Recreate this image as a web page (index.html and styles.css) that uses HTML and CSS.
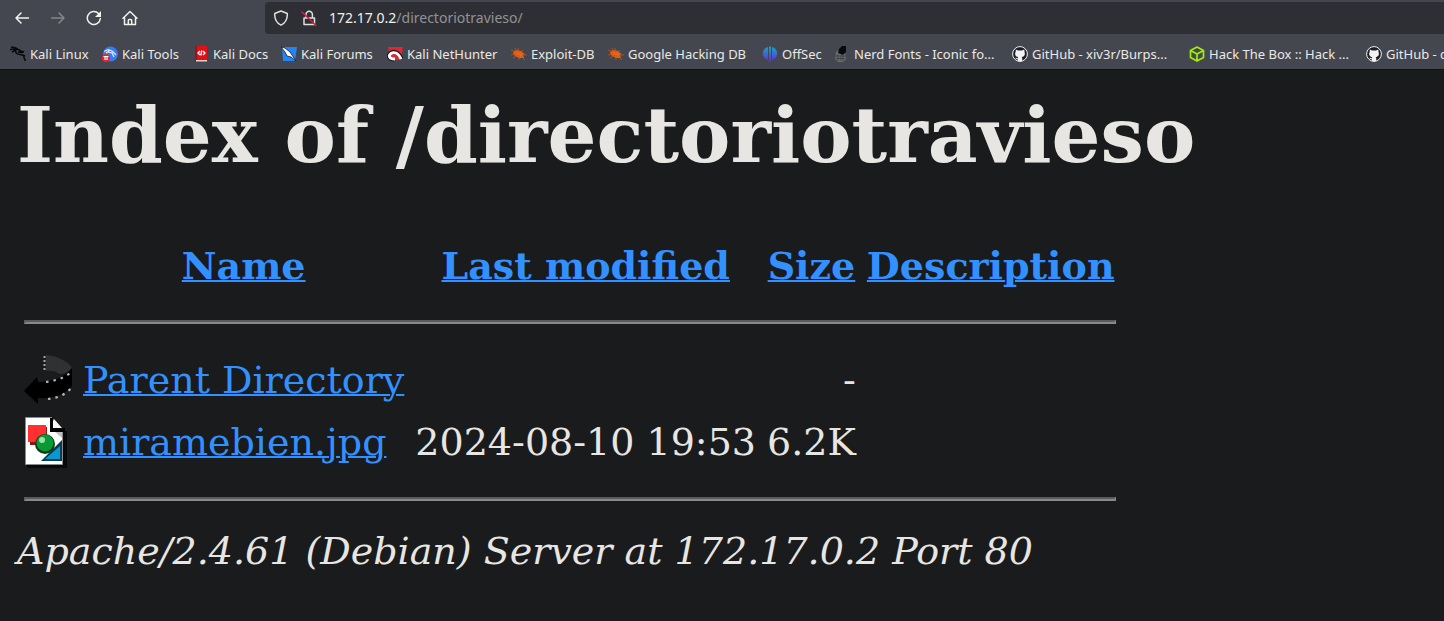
FILE: index.html
```html
<!DOCTYPE html>
<html lang="en">
<head>
<meta charset="utf-8">
<title>Index of /directoriotravieso</title>
<link rel="stylesheet" href="styles.css">
</head>
<body>
<header class="browser">
  <div class="toolbar">
    <div class="nav">
      <button type="button" class="tool" aria-label="Back"><svg viewBox="0 0 16 16"><path d="M14.500 8H2M7 3 2 8l5 5"/></svg></button>
      <button type="button" class="tool" aria-label="Forward" disabled><svg viewBox="0 0 16 16"><path d="M1.500 8H14M9 3l5 5-5 5"/></svg></button>
      <button type="button" class="tool" aria-label="Reload"><svg viewBox="0 0 16 16"><path d="M14.300 8.500A6.500 6.500 0 1 1 12.500 3.500"/><path class="solid" d="M15 1v6H9z"/></svg></button>
      <button type="button" class="tool" aria-label="Home"><svg viewBox="0 0 16 16"><path d="M1 8.200 8 1.500l7 6.700M2.500 7.500v7h11v-7M6.300 14.500v-4q0-1 1-1h1.400q1 0 1 1v4"/></svg></button>
    </div>
    <div class="address-bar">
      <svg class="bar-icon" viewBox="0 0 16 16"><path d="M8 1 14.300 3.500C14.600 9 12.500 13 8 15.200 3.500 13 1.400 9 1.700 3.500z"/></svg>
      <svg class="bar-icon" viewBox="0 0 16 16"><path d="M3 8h10.500v6.500H3zM5 8V4.500a3.200 3.200 0 0 1 6.400 0V8"/><path class="slash" d="M1 2l14 13.500"/></svg>
      <div class="url" role="textbox" aria-label="Address" tabindex="0">172.17.0.2<span class="path">/directoriotravieso/</span></div>
    </div>
  </div>
  <nav class="bookmarks">
    <a class="w-kali" href="#"><svg viewBox="0 0 16 16"><path fill="none" stroke="#08090b" stroke-width="1.500" d="M0 3.500 6 3l4 1M1 1l5 1 3 2M2 6l4-2M6 3.500C5 7 7 8.500 10 8.500s4 1.500 4 3l1.500 3.500M9 4.500l5 1.500M8 6l5 .500M12 9l3 1"/></svg>Kali Linux</a>
    <a class="w-tools" href="#"><svg viewBox="0 0 16 16"><circle cx="8.500" cy="8" r="7.500" fill="#367bf0"/><path fill="none" stroke="#e7f0ff" stroke-width="1.100" d="M2 5.500 6 3.500l4 1.500 4 4M6 6l4 1 2 4M4 7l4-3"/><circle cx="4" cy="12" r="4" fill="#e3262f"/><path stroke="#fff" stroke-width="1.100" d="M1.500 10.500h5M3 10v4M5 10v4"/></svg>Kali Tools</a>
    <a class="w-docs" href="#"><svg viewBox="0 0 16 16"><path fill="#a90e15" d="M2 0h12v15.500H2z"/><path fill="#df1118" d="M4 0h10v14H4z"/><path fill="#e8d5d4" d="M3 14h11v1.500H3z"/><path fill="none" stroke="#fff" stroke-width="1.300" d="M7 5 5 7l2 2M8.800 4.500l-1 5M10 5l2 2-2 2"/></svg>Kali Docs</a>
    <a class="w-forums" href="#"><svg viewBox="0 0 16 16"><path fill="#2484f4" d="M1 1h15l-2 14H2z"/><path fill="#fff" stroke="#111821" stroke-width=".8" d="M0 1l4 1 5 4 2 3 4 6-5-4-4-1-2-4z"/></svg>Kali Forums</a>
    <a class="w-hunter" href="#"><svg viewBox="0 0 16 16"><path fill="#e12632" d="M1 1h15l-2 13H3z"/><path fill="none" stroke="#15171a" stroke-width="4" d="M7.500 13.500c-6 0-7-4-4-6.500s8-1 11 5.500"/><path fill="none" stroke="#fff" stroke-width="2.800" d="M8 13c-6 0-7-3.500-4-5.500S11 6.500 14 13"/></svg>Kali NetHunter</a>
    <a class="w-exploit" href="#"><svg viewBox="0 0 16 16"><path fill="#ef6210" d="m2 6 3-2 5 1 2 2 2 1-2 1 1 3-5 0-5-3z"/><path stroke="#b95422" stroke-width=".8" d="M0 4l5 2M4 2l2 4M7 2l1 5M12 4l-2 3M16 9h-5M0 9l5-1M2 12l5-3M14 14l-4-4M8 14V9"/></svg>Exploit-DB</a>
    <a class="w-google" href="#"><svg viewBox="0 0 16 16"><path fill="#ef6210" d="m2 6 3-2 5 1 2 2 2 1-2 1 1 3-5 0-5-3z"/><path stroke="#b95422" stroke-width=".8" d="M0 4l5 2M4 2l2 4M7 2l1 5M12 4l-2 3M16 9h-5M0 9l5-1M2 12l5-3M14 14l-4-4M8 14V9"/></svg>Google Hacking DB</a>
    <a class="w-offsec" href="#"><svg viewBox="0 0 16 16"><defs><linearGradient id="offsec" x2="0" y2="1"><stop stop-color="#17a4c7"/><stop offset="1" stop-color="#642bd0"/></linearGradient></defs><path fill="url(#offsec)" d="M6 1v13C-1 12-1 3 6 1M10 1v13c7-2 7-11 0-13M7 .5h2V16H7z"/></svg>OffSec</a>
    <a class="w-nerd" href="#"><svg viewBox="0 0 16 16"><path fill="#6a6d72" d="M2 6 6 3l5 3 1 7-3 3H4l-3-3z"/><path fill="#090a0b" d="M5 3 8 0l4 0 0 6-3 3-5-2z"/><path stroke="#3a3c40" stroke-width=".8" d="M1 10h11M2 12.500h9M4 8v7M7 9v6M9 8v7"/></svg>Nerd Fonts - Iconic fo...</a>
    <a class="w-github" href="#"><svg viewBox="0 0 16 16"><circle cx="8" cy="8" r="7.400" fill="#1b1e24" stroke="#f3f3f3" stroke-width="1"/><path fill="#f3f3f3" d="M3.800 3.500 6 4.500h4l2.200-1c.5 1 .3 1.700.2 2.200 1.300 3-.2 5-2.700 5.400.5.500.6 1 .6 4L8 15.500l-2.300-.4v-2c-1.500.3-2-.6-2.700-1.500 1 .1 1.300.9 2.700.6l.5-1.100C3.500 10.700 2.300 8 3.700 5.700z"/></svg>GitHub - xiv3r/Burps...</a>
    <a class="w-htb" href="#"><svg viewBox="0 0 16 16"><path fill="none" stroke="#9fef00" stroke-width="1.700" stroke-linejoin="round" d="m8 1 6.500 3.500v7L8 15l-6.500-3.500v-7zM1.500 4.500 8 8l6.500-3.500M8 8v7"/></svg>Hack The Box :: Hack ...</a>
    <a class="w-last" href="#"><svg viewBox="0 0 16 16"><circle cx="8" cy="8" r="7.400" fill="#1b1e24" stroke="#f3f3f3" stroke-width="1"/><path fill="#f3f3f3" d="M3.800 3.500 6 4.500h4l2.200-1c.5 1 .3 1.700.2 2.200 1.300 3-.2 5-2.700 5.400.5.500.6 1 .6 4L8 15.500l-2.300-.4v-2c-1.500.3-2-.6-2.700-1.500 1 .1 1.300.9 2.700.6l.5-1.100C3.500 10.700 2.300 8 3.700 5.700z"/></svg>GitHub - c</a>
  </nav>
</header>
<main class="listing">
  <h1>Index of /directoriotravieso</h1>
  <table>
    <tr><th></th><th><a href="#">Name</a></th><th><a href="#">Last modified</a></th><th><a href="#">Size</a></th><th><a href="#">Description</a></th></tr>
    <tr class="rule"><td colspan="5"><hr></td></tr>
    <tr>
      <td><svg class="file-icon" viewBox="0 0 48 53" role="img" aria-label="Parent directory"><path fill="#303133" d="M22 1c12 1 23 7 26 13-4 4-8 6-12 6-4-3-9-4-14-3z"/><path fill="#000" d="M0 37 13 23l1 5c14 0 27-5 34-14v18c-7 9-20 13-34 12v6z"/><path fill="none" stroke="#a5a7aa" stroke-width="2" stroke-dasharray="2 2" d="M20.500 2v16"/><path fill="none" stroke="#b2b4b6" stroke-width="2.200" stroke-dasharray="2.500 5" d="M22 28c9-1 18-4 24-9M24 45c9-1 18-4 24-12"/></svg></td>
      <td><a href="#">Parent Directory</a></td><td></td><td class="right">-</td><td></td>
    </tr>
    <tr>
      <td><svg class="file-icon" viewBox="0 0 48 53" role="img" aria-label="Image"><path fill="#08090a" d="M3 48h36V15h4v37H3z"/><path fill="#fff" stroke="#8b8b8b" d="M1.500 1.500h26l11 13v34h-37z"/><path fill="#bfbfbf" d="M29 14h9v8z"/><path fill="#000" d="M26 2h3v10h12v4H26z"/><path fill="#f5f5f5" d="m30 3 8 9h-8z"/><path fill="#8d1515" d="M6 11h17v18H6z"/><path fill="#ff3030" d="M4 9h18v17H4z"/><path fill="#063c58" d="M38 24v21H17z"/><path fill="#0799cf" d="M36 30v13H21z"/><circle cx="21" cy="28" r="10" fill="#123b1a"/><circle cx="21" cy="27" r="8.500" fill="#089a35"/><circle cx="18" cy="24" r="3" fill="#a0dfad"/></svg></td>
      <td><a href="#">miramebien.jpg</a></td><td class="right">2024-08-10 19:53</td><td class="right">6.2K</td><td></td>
    </tr>
    <tr class="rule"><td colspan="5"><hr></td></tr>
  </table>
  <address>Apache/2.4.61 (Debian) Server at 172.17.0.2 Port 80</address>
</main>
</body>
</html>
```
FILE: styles.css
```css
* { box-sizing: border-box; }
html { background: #1a1b1c; }
body { margin: 0; color: #e8e6e3; font-family: "DejaVu Serif", serif; font-size: 38px; line-height: 45px; }
.browser { background: #44474f; color: #e9e9e6; border-bottom: 1px solid #111213; font-family: "Noto Sans", sans-serif; font-size: 13px; line-height: 18px; overflow: hidden; }
.toolbar { display: flex; padding-top: 2px; height: 38px; }
.nav { display: flex; flex: 0 0 265px; gap: 4px; padding-left: 6px; align-items: center; height: 32px; }
.tool { width: 32px; height: 32px; padding: 8px; border: 0; background: none; color: #f2f2ef; }
.tool:disabled { color: #85878b; }
.tool svg, .bar-icon { display: block; width: 16px; height: 16px; fill: none; stroke: currentColor; stroke-width: 1.5; stroke-linejoin: round; stroke-linecap: round; }
.tool .solid { fill: currentColor; stroke: none; }
.address-bar { display: flex; flex: 1; align-items: center; gap: 12px; height: 32px; padding-left: 8px; background: #2e2f34; border-radius: 4px 0 0 4px; color: #dededb; }
.bar-icon { flex: none; }
.bar-icon .slash { stroke: #e01445; }
.url { flex: 1; font-size: 14px; color: #f0efec; }
.url .path { color: #929396; }
.bookmarks { display: flex; height: 31px; padding-left: 10px; align-items: center; white-space: nowrap; }
.bookmarks a { display: flex; flex: none; gap: 4px; align-items: center; color: inherit; text-decoration: none; }
.bookmarks svg { width: 16px; height: 16px; flex: none; }
.w-kali { width: 92px; }
.w-tools { width: 91px; }
.w-docs { width: 88px; }
.w-forums { width: 106px; }
.w-hunter { width: 124px; }
.w-exploit { width: 97px; }
.w-google { width: 154px; }
.w-offsec { width: 72px; }
.w-nerd { width: 178px; }
.w-github { width: 177px; }
.w-htb { width: 177px; }
.listing { padding: 20px 17px 0; }
h1 { margin: 0 0 52px; font-size: 77px; line-height: 90px; white-space: nowrap; }
table { border-collapse: separate; border-spacing: 4px; white-space: nowrap; }
tr { height: 58px; }
tr.rule { height: auto; }
th, td { padding: 0 4px 0 3px; }
.rule td { padding: 3px; }
.right { text-align: right; }
.listing a { color: #3391ff; text-decoration-thickness: 2px; }
hr { margin: 19px 0 20px; border: 2px solid; border-color: #5b5b5b #888 #888 #5b5b5b; }
.file-icon { display: block; width: 48px; height: 53px; }
address { margin-top: 1px; white-space: nowrap; }
```
